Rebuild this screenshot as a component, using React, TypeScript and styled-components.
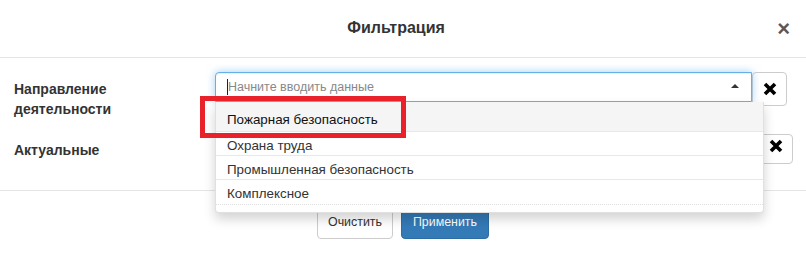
import React from "react";
import styled, { createGlobalStyle } from "styled-components";

const GlobalStyle = createGlobalStyle`
  html, body {
    margin: 0;
    background: #fff;
  }
  body {
    font-family: "Liberation Sans", Arial, sans-serif;
    font-size: 14px;
    color: #333;
  }
`;

const directions = [
  "Пожарная безопасность",
  "Охрана труда",
  "Промышленная безопасность",
  "Комплексное",
];

const RemoveIcon = ({ size = 14 }: { size?: number }) => (
  <svg width={size} height={size} viewBox="0 0 14 14">
    <path
      d="M2 2 L12 12 M12 2 L2 12"
      stroke="#000"
      strokeWidth="3.6"
      strokeLinecap="butt"
    />
  </svg>
);

const App = () => {
  return (
    <>
      <GlobalStyle />
      <Modal>
        <Header>
          <Title>Фильтрация</Title>
          <Close>×</Close>
        </Header>

        <Body>
          <FormRow $gap={15}>
            <Label>
              Направление
              <br />
              деятельности
            </Label>
            <Controls $inset={19}>
              <SelectBox $open>
                <Caret />
                <Placeholder>Начните вводить данные</Placeholder>
                <Arrow />
                <Dropdown>
                  {directions.map((d, i) => (
                    <Option key={d} $active={i === 0}>
                      {d}
                    </Option>
                  ))}
                </Dropdown>
              </SelectBox>
              <ClearButton $height={34}>
                <RemoveIcon />
              </ClearButton>
            </Controls>
          </FormRow>

          <FormRow $gap={0}>
            <Label $top={6}>Актуальные</Label>
            <Controls $inset={13}>
              <SelectBox />
              <ClearButton $height={30} $lift={3}>
                <RemoveIcon />
              </ClearButton>
            </Controls>
          </FormRow>
        </Body>

        <Footer>
          <Button>Очистить</Button>
          <Button $primary>Применить</Button>
        </Footer>

        <Highlight />
      </Modal>
    </>
  );
};

export default App;

const Modal = styled.div`
  position: relative;
  width: 806px;
  background: #fff;
`;

const Header = styled.div`
  display: flex;
  align-items: center;
  padding: 15px 16px 15px 15px;
  border-bottom: 1px solid #e5e5e5;
`;

const Title = styled.h4`
  flex: 1;
  margin: 0;
  text-align: center;
  font-size: 16px;
  line-height: 26px;
  padding-bottom: 1px;
  font-weight: bold;
  color: #333;
`;

const Close = styled.span`
  font-size: 22px;
  font-weight: bold;
  line-height: 1;
  color: #000;
  opacity: 0.65;
`;

const Body = styled.div`
  padding: 14px 0 26px 14px;
`;

const FormRow = styled.div<{ $gap: number }>`
  display: grid;
  grid-template-columns: 201px 1fr;
  align-items: start;
  margin-bottom: ${(p) => p.$gap}px;
`;

const Label = styled.label<{ $top?: number }>`
  padding-top: ${(p) => p.$top ?? 7}px;
  font-weight: bold;
  font-size: 14px;
  line-height: 20px;
  color: #333;
`;

const Controls = styled.div<{ $inset: number }>`
  display: flex;
  align-items: flex-start;
  margin-right: ${(p) => p.$inset}px;
`;

const SelectBox = styled.div<{ $open?: boolean }>`
  position: relative;
  flex: 1;
  height: 30px;
  box-sizing: border-box;
  display: flex;
  align-items: center;
  padding: 0 12px 0 11px;
  border: 1px solid ${(p) => (p.$open ? "#66afe9" : "#ccc")};
  border-radius: ${(p) => (p.$open ? "4px 0 0 0" : "4px 0 0 4px")};
  box-shadow: ${(p) =>
    p.$open
      ? "inset 0 1px 1px rgba(0,0,0,.075), 0 0 8px rgba(102,175,233,.6)"
      : "inset 0 1px 1px rgba(0,0,0,.075)"};
  background: #fff;
`;

const Caret = styled.span`
  width: 1px;
  height: 16px;
  background: #222;
`;

const Placeholder = styled.span`
  flex: 1;
  font-size: 12.5px;
  color: #888;
`;

const Arrow = styled.span`
  width: 0;
  height: 0;
  margin-top: -2px;
  border-left: 4px solid transparent;
  border-right: 4px solid transparent;
  border-bottom: 4px solid #333;
`;

const Dropdown = styled.ul`
  position: absolute;
  z-index: 10;
  top: 100%;
  left: -1px;
  width: 549px;
  margin: 1px 0 0;
  padding: 0 0 7px;
  list-style: none;
  box-sizing: border-box;
  background: #fff;
  border: 1px solid rgba(0, 0, 0, 0.12);
  border-top: none;
  border-radius: 0 0 4px 4px;
  box-shadow: 0 6px 12px rgba(0, 0, 0, 0.175);
`;

const Option = styled.li<{ $active?: boolean }>`
  padding: ${(p) => (p.$active ? "10px 11px 3px" : "6px 11px 1px")};
  font-size: 13.4px;
  line-height: 16px;
  color: ${(p) => (p.$active ? "#111" : "#333")};
  background: ${(p) => (p.$active ? "#f5f5f5" : "#fff")};
  border-bottom: 1px solid #e8e8e8;
  &:last-child {
    padding-bottom: 2px;
    border-bottom: 1px dotted #e0e0e0;
  }
`;

const ClearButton = styled.button<{ $height: number; $lift?: number }>`
  width: 35px;
  height: ${(p) => p.$height}px;
  display: flex;
  align-items: center;
  justify-content: center;
  padding: 0 0 ${(p) => (p.$lift ?? 0) * 2}px;
  background: #fff;
  border: 1px solid #ccc;
  border-radius: 4px;
  cursor: pointer;
`;

const Footer = styled.div`
  display: flex;
  justify-content: center;
  gap: 8px;
  padding: 14px 15px 15px;
  border-top: 1px solid #e5e5e5;
`;

const Button = styled.button<{ $primary?: boolean }>`
  height: 34px;
  padding: 0 ${(p) => (p.$primary ? 11 : 10)}px;
  font-family: "Liberation Sans", Arial, sans-serif;
  font-size: 12.4px;
  border-radius: 4px;
  border: 1px solid ${(p) => (p.$primary ? "#2e6da4" : "#ccc")};
  background: ${(p) => (p.$primary ? "#337ab7" : "#fff")};
  color: ${(p) => (p.$primary ? "#fff" : "#333")};
  cursor: pointer;
`;

const Highlight = styled.div`
  position: absolute;
  left: 200px;
  top: 96px;
  width: 206px;
  height: 42px;
  box-sizing: border-box;
  border: 5px solid #e8212b;
  z-index: 20;
  pointer-events: none;
`;
